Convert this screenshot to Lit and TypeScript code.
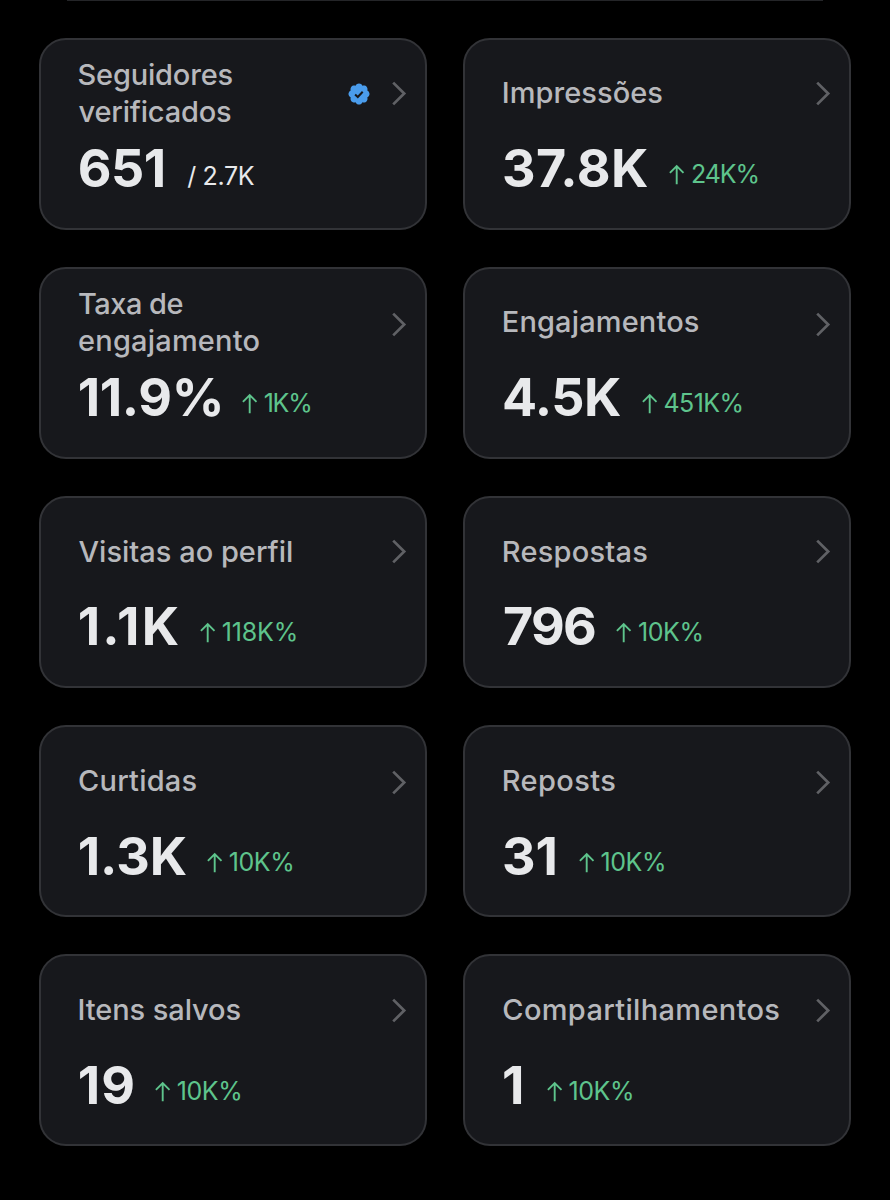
import { LitElement, html, css, nothing } from "lit";
import { customElement, property, state } from "lit/decorators.js";
import { styleMap } from "lit/directives/style-map.js";
import { classMap } from "lit/directives/class-map.js";

interface Line { text: string; width: number; bearing: number; }
interface Metric {
  label: Line[];
  value: string;
  valueWidth: number;
  advance: number;
  delta?: string;
  deltaWidth?: number;
  total?: string;
  low?: boolean;
}

const line = (text: string, width: number, bearing = 1): Line => ({ text, width, bearing });

const METRICS: Metric[] = [
  { label: [line("Seguidores", 154, 0.5), line("verificados", 152.5, 0.5)], value: "651", valueWidth: 84, advance: 107.5, total: "/ 2.7K" },
  { label: [line("Impressões", 158.5, 1.5)], value: "37.8K", valueWidth: 144, advance: 165.5, delta: "24K%", deltaWidth: 65.5 },
  { label: [line("Taxa de", 103.5), line("engajamento", 180.5)], value: "11.9%", valueWidth: 141, advance: 162.5, delta: "1K%", deltaWidth: 45.5, low: true },
  { label: [line("Engajamentos", 195, 1.5)], value: "4.5K", valueWidth: 117, advance: 138, delta: "451K%", deltaWidth: 77, low: true },
  { label: [line("Visitas ao perfil", 213.5, 0)], value: "1.1K", valueWidth: 99, advance: 120.5, delta: "118K%", deltaWidth: 73 },
  { label: [line("Respostas", 143.5, 1.5)], value: "796", valueWidth: 91, advance: 112.5, delta: "10K%", deltaWidth: 62.5 },
  { label: [line("Curtidas", 117.5)], value: "1.3K", valueWidth: 107, advance: 127.5, delta: "10K%", deltaWidth: 62.5, low: true },
  { label: [line("Reposts", 111.5, 1.5)], value: "31", valueWidth: 51.5, advance: 75, delta: "10K%", deltaWidth: 62.5, low: true },
  { label: [line("Itens salvos", 161, 1.5)], value: "19", valueWidth: 53.5, advance: 75.5, delta: "10K%", deltaWidth: 62.5 },
  { label: [line("Compartilhamentos", 276, 1)], value: "1", valueWidth: 20, advance: 43, delta: "10K%", deltaWidth: 62.5 },
];

/** Single line of text whose tracking is adjusted to span a given ink width. */
@customElement("fit-text")
export class FitText extends LitElement {
  @property() text = "";
  @property({ type: Number }) width = 0;
  @state() private tracking = 0;
  @state() private shift = 0;

  static styles = css`
    :host { display: block; white-space: nowrap; }
    .ink { display: block; }
  `;

  firstUpdated() {
    const cs = getComputedStyle(this);
    const ctx = document.createElement("canvas").getContext("2d")!;
    ctx.font = `${cs.fontWeight} ${cs.fontSize} ${cs.fontFamily}`;
    const m = ctx.measureText(this.text);
    const natural = m.actualBoundingBoxRight + m.actualBoundingBoxLeft;
    const gaps = this.text.length - 1;
    this.shift = m.actualBoundingBoxLeft;
    this.tracking = gaps > 0 ? (this.width - natural) / gaps : 0;
  }

  render() {
    return html`<span class="ink" style=${styleMap({
      letterSpacing: `${this.tracking}px`,
      marginLeft: `${this.shift}px`,
    })}>${this.text}</span>`;
  }
}

@customElement("metric-card")
export class MetricCard extends LitElement {
  @property({ attribute: false }) metric!: Metric;

  static styles = css`
    :host {
      display: flex;
      flex-direction: column;
      box-sizing: border-box;
      height: 192px;
      padding: 17.5px 18px 0 37.5px;
      border: 2px solid #323337;
      border-radius: 27px;
      background: #17181c;
    }
    .head { display: flex; align-items: center; height: 73px; flex: none; }
    .label {
      flex: 1;
      font-size: 29px;
      font-weight: 500;
      line-height: 36.5px;
      color: #b7b8bc;
      min-width: 0;
    }
    .badge { width: 22px; height: 22px; margin-right: 22px; flex: none; }
    .chevron { width: 15px; height: 25px; flex: none; }
    .chevron.low { margin-top: 3px; }
    .row { display: flex; height: 60px; flex: none; margin-top: 9px; }
    .value {
      flex: none;
      margin-left: 1.2px;
      font-size: 52px;
      font-weight: 700;
      line-height: 60px;
      color: #e8e9eb;
    }
    .delta { display: flex; color: #5ec48c; font-size: 25px; line-height: 70px; }
    .delta-text { margin-left: 6.5px; }
    .arrow { width: 16px; height: 21px; margin-top: 25px; flex: none; }
    .total { color: #e8e9eb; font-size: 25px; line-height: 74px; }
  `;

  render() {
    const m = this.metric;
    return html`
      <div class="head">
        <div class="label">
          ${m.label.map((l) => html`<fit-text .text=${l.text} .width=${l.width}
            style=${styleMap({ paddingLeft: `${Math.max(0, l.bearing - 0.5)}px` })}></fit-text>`)}
        </div>
        ${m.total ? html`<svg class="badge" viewBox="0 0 22 22">
          <path fill="#4a9cec" d="M20.396 11c-.018-.646-.215-1.275-.57-1.816-.354-.54-.852-.972-1.438-1.246.223-.607.27-1.264.14-1.897-.131-.634-.437-1.218-.882-1.687-.47-.445-1.053-.75-1.687-.882-.633-.13-1.29-.083-1.897.14-.273-.587-.704-1.086-1.245-1.44S11.647 1.62 11 1.604c-.646.017-1.273.213-1.813.568s-.969.854-1.24 1.44c-.608-.223-1.267-.272-1.902-.14-.635.13-1.22.436-1.69.882-.445.47-.749 1.055-.878 1.688-.13.633-.08 1.29.144 1.896-.587.274-1.087.705-1.443 1.245-.356.54-.555 1.17-.574 1.817.02.647.218 1.276.574 1.817.356.54.856.972 1.443 1.245-.224.606-.274 1.263-.144 1.896.13.634.433 1.218.877 1.688.47.443 1.054.747 1.687.878.633.132 1.29.084 1.897-.136.274.586.705 1.084 1.246 1.439.54.354 1.17.551 1.816.569.647-.016 1.276-.213 1.817-.567s.972-.854 1.245-1.44c.604.239 1.266.296 1.903.164.636-.132 1.22-.447 1.68-.907.46-.46.776-1.044.908-1.681s.075-1.299-.165-1.903c.586-.274 1.084-.705 1.439-1.246.354-.54.551-1.17.569-1.816z" transform="translate(11 11) scale(1.12) translate(-11 -11)"/>
          <path d="M7.1 11.5L9.8 14L14.7 8.7" fill="none" stroke="#17181c" stroke-width="2"/>
        </svg>` : nothing}
        <svg class=${classMap({ chevron: true, low: !!m.low })} viewBox="0 0 15 25">
          <path d="M1.2 1.6L12.2 12.5L1.2 23.4" fill="none" stroke="#606165" stroke-width="2.7"/>
        </svg>
      </div>
      <div class="row">
        <fit-text class="value" .text=${m.value} .width=${m.valueWidth}
          style=${styleMap({ width: `${m.advance}px` })}></fit-text>
        ${m.delta ? html`<div class="delta">
          <svg class="arrow" viewBox="0 0 16 21">
            <path d="M7.7 20.3V2M0.9 8.8L7.7 2L14.5 8.8" fill="none" stroke="currentColor" stroke-width="1.9"/>
          </svg>
          <fit-text class="delta-text" .text=${m.delta} .width=${m.deltaWidth ?? 0}></fit-text>
        </div>` : html`<fit-text class="total" .text=${m.total ?? ""} .width=${67.5}></fit-text>`}
      </div>
    `;
  }
}

@customElement("app-root")
export class AppRoot extends LitElement {
  static styles = css`
    :host {
      display: block;
      box-sizing: border-box;
      height: 1200px;
      overflow: hidden;
      background: #000;
      font-family: Inter, "Liberation Sans", sans-serif;
    }
    .edge { height: 1px; margin: 0 67px 36.5px; background: #242528; }
    .grid {
      display: grid;
      grid-template-columns: 388px 388px;
      column-gap: 36.3px;
      row-gap: 37.2px;
      padding-left: 39px;
    }
  `;

  render() {
    return html`
      <div class="edge"></div>
      <div class="grid">
        ${METRICS.map((m) => html`<metric-card .metric=${m}></metric-card>`)}
      </div>
    `;
  }
}
